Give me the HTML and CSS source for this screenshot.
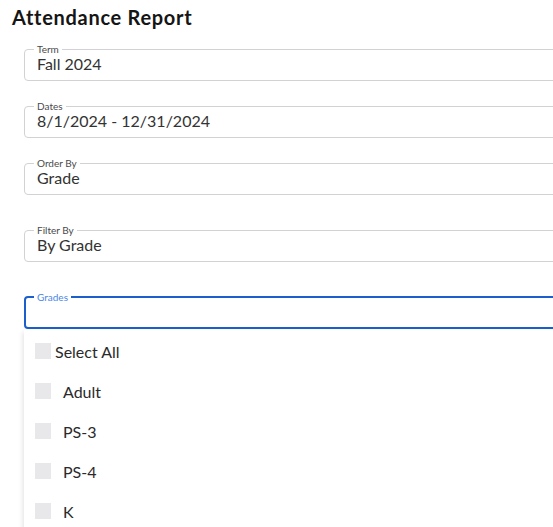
FILE: index.html
```
<!DOCTYPE html>
<html>
<head>
<meta charset="utf-8">
<link rel="stylesheet" href="styles.css">
</head>
<body>
<div class="page">
  <h1 class="title">Attendance Report</h1>
  <div class="form">
    <div class="group">
      <fieldset class="field"><legend class="field-label">Term</legend><div class="field-value">Fall 2024</div></fieldset>
      <fieldset class="field"><legend class="field-label">Dates</legend><div class="field-value">8/1/2024 - 12/31/2024</div></fieldset>
      <fieldset class="field"><legend class="field-label">Order By</legend><div class="field-value">Grade</div></fieldset>
    </div>
    <div class="group group-filter">
      <fieldset class="field"><legend class="field-label">Filter By</legend><div class="field-value">By Grade</div></fieldset>
      <div class="select-wrap">
        <fieldset class="field field-focused"><legend class="field-label">Grades</legend><div class="field-value"></div></fieldset>
        <div class="menu">
          <div class="menu-item"><span class="check"></span><span class="item-label tight">Select All</span></div>
          <div class="menu-item"><span class="check"></span><span class="item-label">Adult</span></div>
          <div class="menu-item"><span class="check"></span><span class="item-label">PS-3</span></div>
          <div class="menu-item"><span class="check"></span><span class="item-label">PS-4</span></div>
          <div class="menu-item"><span class="check"></span><span class="item-label">K</span></div>
          <div class="menu-item"><span class="check"></span><span class="item-label">1</span></div>
        </div>
      </div>
    </div>
  </div>
</div>
</body>
</html>
```
FILE: styles.css
```
html, body {
  margin: 0;
  padding: 0;
  background: #ffffff;
  overflow: hidden;
  height: 100%;
}
body {
  font-family: "Lato", "Open Sans", sans-serif;
  color: #2b2b2b;
}
.page {
  width: 620px;
  padding: 5px 0 0 0;
}
.title {
  margin: 0;
  padding: 0 12px;
  font-size: 20px;
  line-height: 24px;
  font-weight: 700;
  letter-spacing: 0.7px;
  color: #151515;
}
.form {
  padding: 14px 0 0 24px;
}
.group {
  display: flex;
  flex-direction: column;
  gap: 19px;
}
.group-filter {
  margin-top: 29px;
  gap: 29px;
}
.field {
  margin: 0;
  padding: 0 12px 7px 12px;
  border: 1px solid #d2d2d6;
  border-radius: 4px;
  min-width: 0;
}
.field-label {
  font-size: 10px;
  line-height: 12px;
  padding: 0 3px;
  margin-left: -3px;
  color: #4a4a4a;
}
.field-value {
  font-size: 16px;
  line-height: 18px;
  height: 18px;
  color: #333333;
}
.field-focused {
  border: 2px solid #1a5fcc;
  padding: 0 11px 6px 11px;
}
.field-focused .field-label {
  color: #4a86e8;
}
.select-wrap {
  position: relative;
}
.menu {
  position: absolute;
  top: 100%;
  left: 0;
  right: 0;
  margin-top: 1px;
  background: #ffffff;
  box-shadow: -1px 2px 5px rgba(0, 0, 0, 0.12);
  padding: 1px 0 0 0;
  height: 400px;
}
.menu-item {
  display: flex;
  align-items: center;
  height: 40px;
  padding-left: 11px;
}
.check {
  width: 16px;
  height: 16px;
  background: #e8e8ea;
  flex: none;
}
.item-label {
  margin-left: 12px;
  font-size: 16px;
  color: #2a2a2a;
}
.item-label.tight {
  margin-left: 4px;
}
```
